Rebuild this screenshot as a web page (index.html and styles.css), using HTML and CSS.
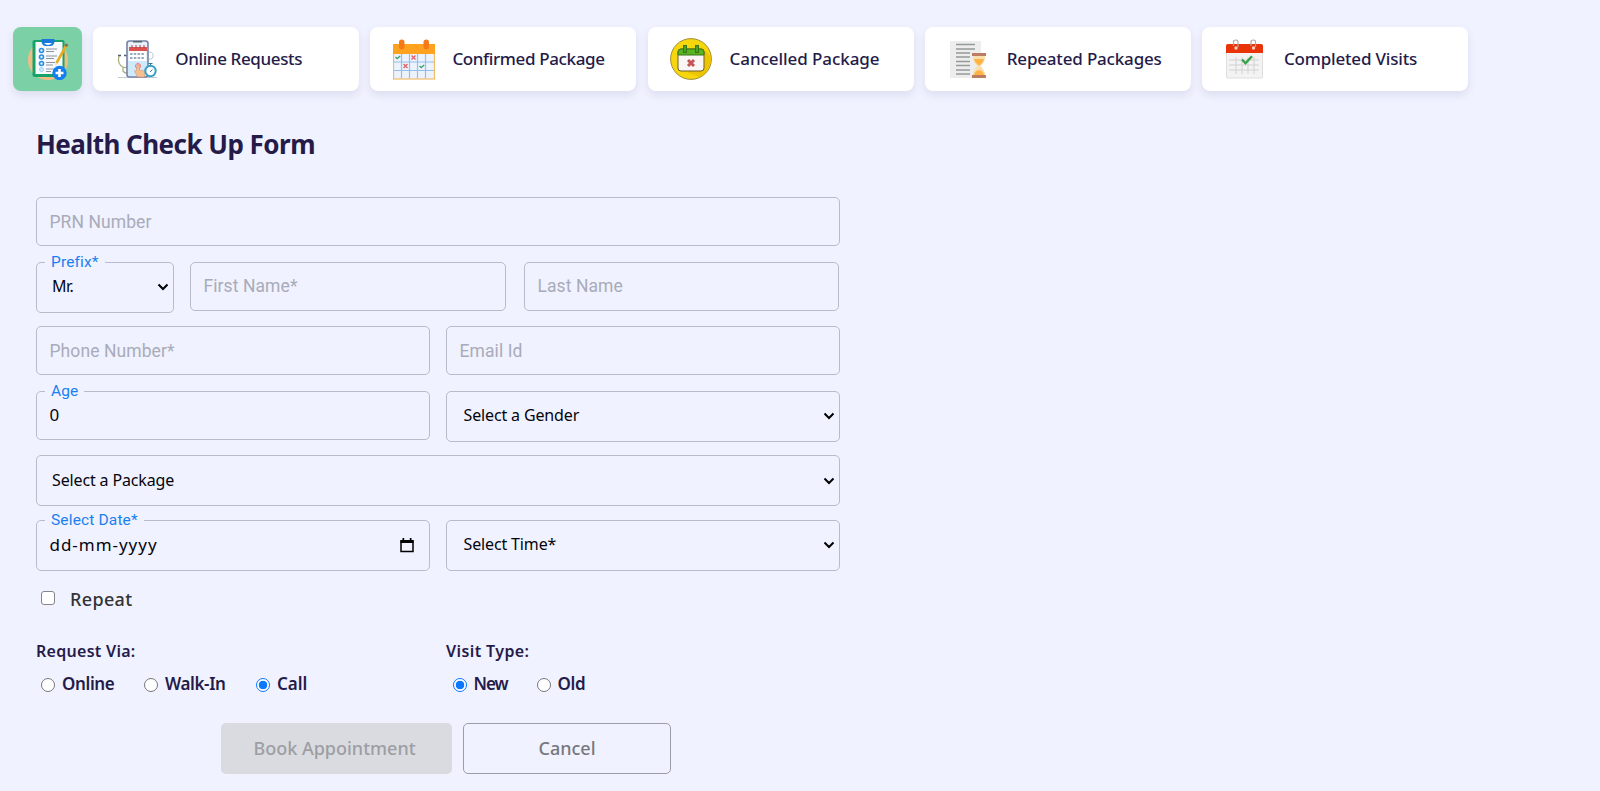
FILE: index.html
```html
<!DOCTYPE html>
<html lang="en">
<head>
<meta charset="utf-8">
<title>Health Check Up Form</title>
<link rel="stylesheet" href="styles.css">
</head>
<body>
<nav class="tabs">
  <a class="tab tab-active">
    <svg class="icon" viewBox="0 0 42 42"><circle cx="21" cy="22" r="20" fill="#f0bd85"/><rect x="5.500" y="2" width="32" height="37" rx="2" fill="#16a36b"/><path d="M8.500 4h27v32h-27z" fill="#f6faff"/><path d="M14.500 1h13v3q-1 4-4 4h-5q-3 0-4-4z" fill="#1878dd"/><path d="M17 5q4 4 8 0z" fill="#fff"/><g fill="#dff1ff" stroke="#2b8de0" stroke-width="1.6"><circle cx="14.500" cy="12.500" r="2"/><circle cx="14.500" cy="19" r="2"/><circle cx="14.500" cy="25.500" r="2"/></g><circle cx="14.500" cy="31.500" r="2" fill="#cde9fb" stroke="#9dd0f2"/><path d="M19 11h11M19 13.500h8M19 18h11M19 20.500h8M19 24.500h9M19 27h7M19 31h9M19 33.500h5" stroke="#8d949c" stroke-width="1.100"/><path d="M39.500 7L29.500 25" stroke="#e9ad20" stroke-width="2.600"/><path d="M40 6l-1.300 2.400" stroke="#8b6a55" stroke-width="3"/><path d="M28.200 28l.2-3.700 2.300 1.400z" fill="#f4d9a8"/><circle cx="32.500" cy="35" r="7.200" fill="#137ff0"/><path d="M32.500 31v8M28.500 35h8" stroke="#fff" stroke-width="2.600"/></svg>
  </a>
  <a class="tab">
    <svg class="icon" viewBox="0 0 42 42"><path d="M2 39.500h39" stroke="#c7cbd4"/><path d="M3 18q-2 8 4 11t6-10M7 29v4q3 4 6 0" fill="none" stroke="#a9b27a" stroke-width="1.300"/><path d="M2 17.500h3M8 17.500h3" stroke="#53606b" stroke-width="1.500"/><path d="M33 14q5 0 4 5-1 3-4 2" fill="none" stroke="#bcc5dc"/><rect x="11" y="3" width="21" height="36" rx="2.500" fill="#e9f1fb" stroke="#7581a3" stroke-width="1.600"/><path d="M17 3h9v1.500h-9z" fill="#566"/><path d="M13 9h18v4H13z" fill="#df514c"/><path d="M16 7v3M20 7v3M24 7v3M28 7v3" stroke="#9b4750"/><path d="M13 13h17v10H13z" fill="#fff"/><path d="M14 16h15M14 20h15" stroke="#9aabb9" stroke-width="2" stroke-dasharray="2.500 1.300"/><path d="M12 23h19v15H12z" fill="#cfeafd"/><circle cx="22" cy="28" r="2.500" fill="none" stroke="#f27875"/><path d="M21 27q1.500-1.500 2.500 0v5l5 1v6h-7l-3-6 2-.5z" fill="#f5be91" stroke="#d89469" stroke-width=".6"/><circle cx="34.500" cy="33" r="5.200" fill="#fff" stroke="#3a9fc5" stroke-width="2"/><path d="M34.500 25.500v2M32.500 25.500h4M34 34l2.500-2.500" stroke="#317c9c"/></svg>
    <span class="t-online">Online Requests</span>
  </a>
  <a class="tab">
    <svg class="icon" viewBox="0 0 42 42"><rect x=".5" y="7" width="41" height="34" fill="#edf3fc" stroke="#f4b966" stroke-width="1.200"/><path d="M0 6h42v10H0z" fill="#ffa21f"/><rect x="6" y="1.500" width="5.500" height="10" rx="2.700" fill="#f67a18"/><rect x="30.500" y="1.500" width="5.500" height="10" rx="2.700" fill="#f67a18"/><path d="M8.500 16v24.500M16.500 16v24.500M24.500 16v24.500M32.500 16v24.500M1 24h40M1 32.500h40" stroke="#94bee8" stroke-width="1.200"/><path d="M2.500 19l1.700 1.600 3-2.600M26.500 28l1.700 1.600 3-2.600" fill="none" stroke="#36a16b" stroke-width="1.300"/><path d="M18.500 17.500l4 4m0-4l-4 4M10.500 26l4 4m0-4l-4 4" stroke="#e4606b" stroke-width="1.400"/></svg>
    <span class="t-confirmed">Confirmed Package</span>
  </a>
  <a class="tab">
    <svg class="icon" viewBox="0 0 42 42"><circle cx="21" cy="21" r="20.400" fill="#f6d70e" stroke="#a48c36"/><path d="M32 9L41 19q1 12-11 20L18 35z" fill="#ecc500"/><rect x="8" y="11" width="26" height="22" rx="3" fill="#f9f6f5" stroke="#705f2a"/><path d="M8 17v-3q0-3 3-3h20q3 0 3 3v3z" fill="#58b321" stroke="#39751a"/><g fill="#46a51c" stroke="#39751a"><rect x="13.500" y="7.500" width="3" height="7"/><rect x="25.500" y="7.500" width="3" height="7"/></g><path d="M18 22l6 6m0-6l-6 6" stroke="#c55656" stroke-width="3"/></svg>
    <span class="t-cancelled">Cancelled Package</span>
  </a>
  <a class="tab">
    <svg class="icon" viewBox="0 0 42 42"><path d="M3 3h31v37H3z" fill="#ededed"/><path d="M9 6.500h19M9 11h19M9 15h14M9 19h14M9 23.500h14M9 27.500h14M9 32h14M9 36h14" stroke="#949b98" stroke-width="1.400"/><path d="M26 17h12v4q-1 4-4.500 7 3.500 3 4.500 7v4H26v-4q1-4 4.500-7-3.500-3-4.500-7z" fill="#f8dfae"/><path d="M27 21h10q-1 4-5 6.500Q28 25 27 21zM27 38q0-5 5-6 5 1 5 6z" fill="#ffb344"/><path d="M25 16.500h14M25 38.500h14" stroke="#bd7c60" stroke-width="3"/></svg>
    <span class="t-repeated">Repeated Packages</span>
  </a>
  <a class="tab">
    <svg class="icon" viewBox="0 0 42 42"><rect x="2.500" y="7" width="36" height="33" rx="1" fill="#f3f3f3" stroke="#dedede"/><path d="M2 15V8q0-2 2-2h33q2 0 2 2v7z" fill="#e93308"/><path d="M12 19v17M18 19v17M24 19v17M30 19v17M5 22h30M5 27h30M5 32h30" stroke="#d1d1d1"/><circle cx="12" cy="10" r="1.700" fill="#f6cfc5"/><circle cx="29.500" cy="10" r="1.700" fill="#f6cfc5"/><path d="M9.500 8V4q0-2 2.500-2t2 3v4M27 8V4q0-2 2.500-2t2 3v4" fill="none" stroke="#aaa" stroke-width="1.200"/><path d="M18 21.500l3.500 3.800 6.500-7" fill="none" stroke="#36a34b" stroke-width="2.400"/></svg>
    <span class="t-completed">Completed Visits</span>
  </a>
</nav>

<main class="form">
  <h1 class="title">Health Check Up Form</h1>

  <div class="row"><div class="field"><span class="hint">PRN Number</span></div></div>
  <div class="row row-name">
    <div class="field select"><span class="float">Prefix*</span><span class="value t-mr">Mr.</span><svg class="chevron" viewBox="0 0 12 8"><path d="M1.500 1.500L6 6l4.500-4.500"/></svg></div>
    <div class="field first-name"><span class="hint">First Name*</span></div>
    <div class="field"><span class="hint">Last Name</span></div>
  </div>
  <div class="row row-half">
    <div class="field"><span class="hint">Phone Number*</span></div>
    <div class="field"><span class="hint">Email Id</span></div>
  </div>
  <div class="row row-half">
    <div class="field"><span class="float t-age">Age</span><span class="value t-zero">0</span></div>
    <div class="field select inset"><span class="value">Select a Gender</span><svg class="chevron" viewBox="0 0 12 8"><path d="M1.500 1.500L6 6l4.500-4.500"/></svg></div>
  </div>
  <div class="row"><div class="field select"><span class="value">Select a Package</span><svg class="chevron" viewBox="0 0 12 8"><path d="M1.500 1.500L6 6l4.500-4.500"/></svg></div></div>
  <div class="row row-half">
    <div class="field date"><span class="float">Select Date*</span><span class="value t-dmy">dd-mm-yyyy</span><svg class="calendar" viewBox="0 0 14 15"><path d="M1 3h12v10.500H1z" fill="none" stroke="#000" stroke-width="1.500"/><path d="M.5 2h13v3H.5zM2.500 0h1.700v3H2.500zM9.800 0h1.700v3H9.800z"/></svg></div>
    <div class="field select inset"><span class="value">Select Time*</span><svg class="chevron" viewBox="0 0 12 8"><path d="M1.500 1.500L6 6l4.500-4.500"/></svg></div>
  </div>

  <label class="repeat"><span class="box"></span><span class="t-repeat">Repeat</span></label>

  <div class="choices">
    <section>
      <h2 class="legend t-via">Request Via:</h2>
      <div class="options via">
        <label class="option"><span class="radio"></span><span class="t-on">Online</span></label>
        <label class="option"><span class="radio"></span><span class="t-on">Walk-In</span></label>
        <label class="option"><span class="radio checked"></span><span>Call</span></label>
      </div>
    </section>
    <section>
      <h2 class="legend t-type">Visit Type:</h2>
      <div class="options visit">
        <label class="option"><span class="radio checked"></span><span class="t-new">New</span></label>
        <label class="option"><span class="radio"></span><span class="t-on">Old</span></label>
      </div>
    </section>
  </div>

  <div class="actions">
    <div class="button primary">Book Appointment</div>
    <div class="button">Cancel</div>
  </div>
</main>
</body>
</html>
```
FILE: styles.css
```css
* { box-sizing: border-box; }
body { margin: 0; height: 791px; overflow: hidden; background: #f0f2ff; font-family: "Noto Sans", sans-serif; color: #251b49; }
.tabs { display: flex; gap: 11.2px; padding: 27px 0 0 13px; }
.tab { display: flex; align-items: center; gap: 17.500px; width: 266px; height: 64px; padding: 0 22.5px; background: #fff; border-radius: 8px; box-shadow: 0 4px 8px rgba(50, 50, 93, .1); font-size: 17px; font-weight: 500; white-space: nowrap; }
.tab span { padding-bottom: 2px; }
.tab-active { width: 69px; padding: 0 14px; background: #7bd0a5; }
.icon { width: 42px; height: 42px; flex: none; }
.form { width: 804px; margin-left: 36px; padding-top: 31.500px; }
.title { margin: 0; height: 74.500px; font-size: 26px; line-height: 42px; font-weight: 700; letter-spacing: -.52px; white-space: nowrap; }
.row { display: grid; align-items: start; height: 64.600px; }
.row-name { grid-template-columns: 138px 318px 315px; column-gap: 16px; }
.row-half { grid-template-columns: 394px 394px; column-gap: 16px; }
.field { position: relative; display: flex; align-items: center; height: 49px; padding: 0 12.500px; border: 1px solid #b9bbcb; border-radius: 5px; white-space: nowrap; font-size: 16px; }
.first-name { width: 316px; }
.select { height: 51px; padding: 0 4px 0 15px; justify-content: space-between; }
.inset { padding-left: 16.500px; }
.date { height: 51px; padding-right: 15px; justify-content: space-between; }
.hint { font: 17.500px Roboto, sans-serif; letter-spacing: .08px; color: #a9abb9; }
.value { padding-bottom: 2px; letter-spacing: -.14px; color: #05050d; }
.float { position: absolute; top: -11px; left: 8px; padding: 0 6px; background: #f0f2ff; font: 15.500px/20px Roboto, sans-serif; letter-spacing: .15px; color: #1a7ff0; }
.chevron { width: 12px; height: 8px; fill: none; stroke: #000; stroke-width: 2; }
.calendar { width: 14px; height: 15px; }
.repeat { display: flex; align-items: center; gap: 15px; height: 30px; margin-top: -1px; padding-left: 5px; font-size: 18px; font-weight: 500; color: #333; }
.box { width: 14px; height: 14px; margin-bottom: 2px; border: 1px solid #858585; border-radius: 3px; background: #fff; }
.choices { display: grid; grid-template-columns: 394px 394px; column-gap: 16px; padding-top: 25.500px; }
.legend { margin: 0; font-size: 16px; line-height: 24px; font-weight: 600; white-space: nowrap; }
.options { display: flex; padding: 9px 0 0 5px; font-size: 17px; line-height: 24px; font-weight: 600; white-space: nowrap; }
.option { display: flex; align-items: center; gap: 7px; }
.via .option { width: 103px; }
.via .option + .option { width: 112px; }
.visit { padding-left: 6.500px; }
.visit .option { width: 84px; }
.radio { width: 14px; height: 14px; margin-top: 2px; border: 1px solid #777; border-radius: 50%; background: #fff; }
.checked { border-color: #0b78ff; background: radial-gradient(circle, #0b78ff 4px, #fff 4.600px); }
.actions { display: flex; gap: 11px; padding: 26.500px 0 0 185px; }
.button { display: flex; align-items: center; justify-content: center; width: 208px; height: 51px; padding-bottom: 1px; border: 1px solid #9c9da8; border-radius: 5px; color: #77787e; font-size: 18px; font-weight: 500; white-space: nowrap; }
.primary { width: 231px; padding-right: 4px; border: 0; background: #dadbe0; color: #9c9ea4; }
.t-online, .t-confirmed { letter-spacing: -.37px; }
.t-cancelled { letter-spacing: -.07px; }
.t-repeated, .t-completed { letter-spacing: -.18px; }
.t-mr { letter-spacing: -.5px; }
.t-zero { font-size: 17px; }
.t-dmy { font-size: 17px; letter-spacing: .97px; }
.t-repeat { letter-spacing: .35px; }
.t-via { letter-spacing: .28px; }
.t-type { letter-spacing: .4px; }
.t-on { letter-spacing: -.38px; }
.t-new { letter-spacing: -1.1px; }
```
